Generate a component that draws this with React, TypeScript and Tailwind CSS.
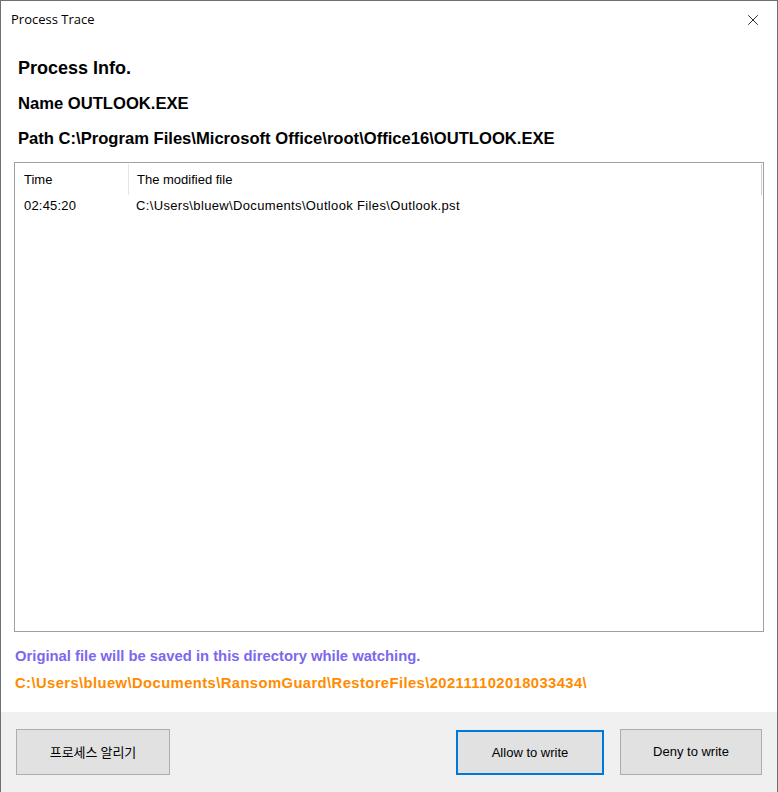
import { X } from 'lucide-react';

const rows = [
  { time: '02:45:20', file: 'C:\\Users\\bluew\\Documents\\Outlook Files\\Outlook.pst' },
];

export default function App() {
  return (
    <div className="w-[778px] h-[792px] bg-white border-l border-t border-r border-[#707070] flex flex-col overflow-hidden font-['Liberation_Sans',Arial,sans-serif] text-black">
      {/* Title bar */}
      <div className="h-[38px] flex items-start justify-between shrink-0">
        <span className="pl-[10px] pt-[9px] text-[13px] leading-[18px] font-['Open_Sans','Noto_Sans',sans-serif]">
          Process Trace
        </span>
        <div className="w-[46px] h-[31px] flex items-center justify-center pt-[6px] pr-[2px]">
          <X className="w-[18px] h-[18px]" strokeWidth={1.1} />
        </div>
      </div>

      {/* Process info */}
      <div className="px-[17px] pt-[19px] flex flex-col font-bold">
        <div className="text-[18px] leading-[20px]">Process Info.</div>
        <div className="mt-[16px] text-[16.6px] leading-[20px]">Name OUTLOOK.EXE</div>
        <div className="mt-[15px] text-[16.6px] leading-[20px]">
          Path C:\Program Files\Microsoft Office\root\Office16\OUTLOOK.EXE
        </div>
      </div>

      {/* List view */}
      <div className="mx-[13px] mt-[13px] h-[470px] border border-[#a0a0a0] flex flex-col text-[13px] shrink-0">
        <div className="flex h-[32px] items-center mr-[1px] pt-[1px]">
          <div className="w-[114px] pl-[9px] h-full flex items-center border-r border-[#e5e5e5]">Time</div>
          <div className="flex-1 pl-[8px] h-full flex items-center border-r border-[#d0d0d0]">The modified file</div>
        </div>
        {rows.map((r) => (
          <div key={r.time} className="flex h-[20px] items-center mt-[1px]">
            <div className="w-[114px] pl-[9px] tracking-[0.2px]">{r.time}</div>
            <div className="flex-1 pl-[7px] tracking-[0.35px]">{r.file}</div>
          </div>
        ))}
      </div>

      {/* Notice */}
      <div className="px-[14px] pt-[15px] font-bold text-[14.8px] leading-[18px]">
        <div className="text-[#7b68ee]">Original file will be saved in this directory while watching.</div>
        <div className="mt-[9px] text-[#ff8c00] tracking-[0.4px]">
          C:\Users\bluew\Documents\RansomGuard\RestoreFiles\202111102018033434\
        </div>
      </div>

      {/* Footer */}
      <div className="mt-auto h-[80px] bg-[#f0f0f0] flex items-start px-[15px] pt-[17px] text-[13px] shrink-0">
        <button className="w-[154px] h-[46px] bg-[#e1e1e1] border border-[#adadad] font-['Noto_Sans_CJK_KR',sans-serif]">
          프로세스 알리기
        </button>
        <div className="ml-auto flex gap-[16px]">
          <button className="w-[148px] h-[45px] mt-[1px] bg-[#e1e1e1] border-2 border-[#0078d7]">Allow to write</button>
          <button className="w-[142px] h-[46px] bg-[#e1e1e1] border border-[#adadad]">Deny to write</button>
        </div>
      </div>
    </div>
  );
}
